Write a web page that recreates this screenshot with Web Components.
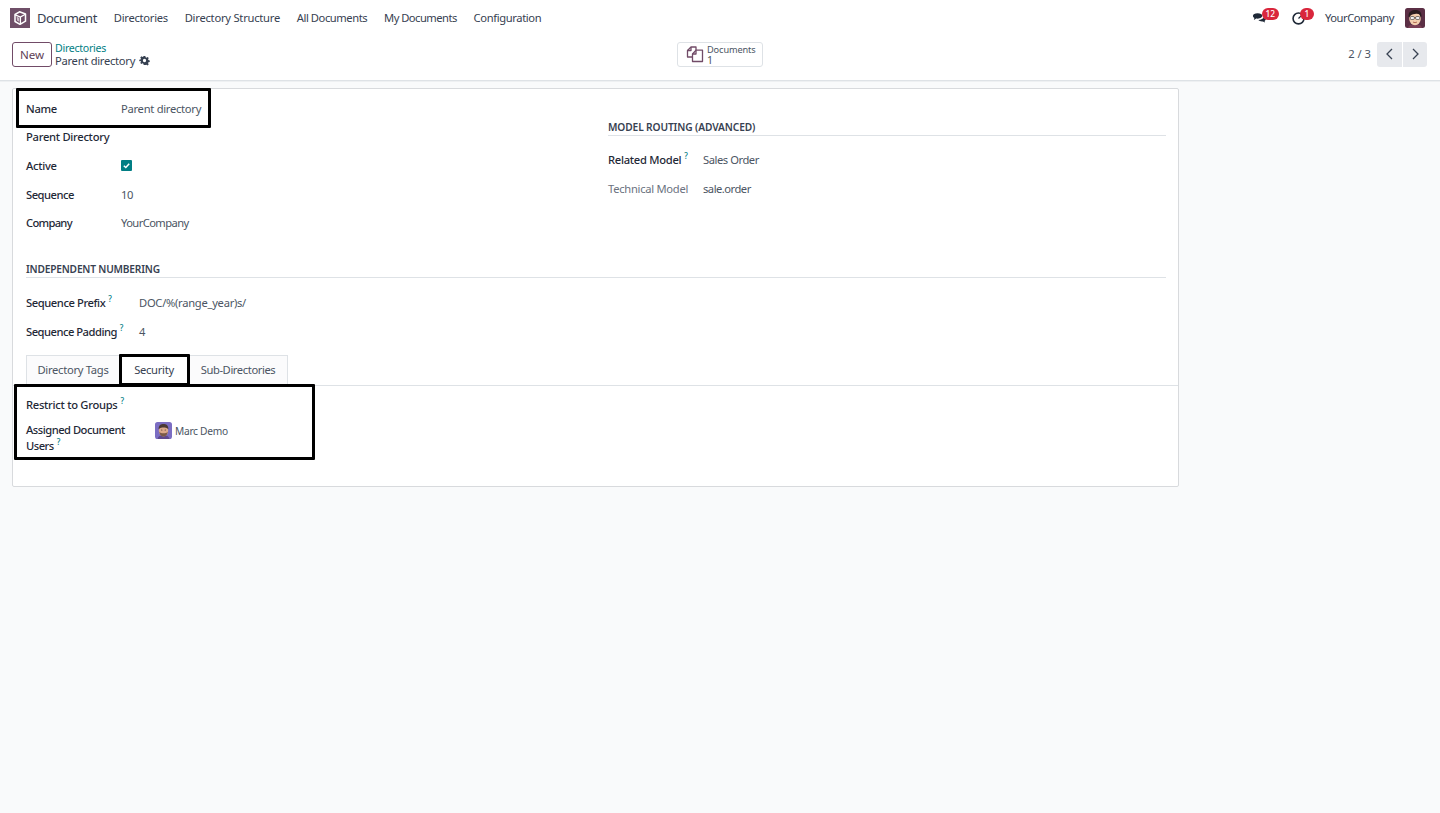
<!DOCTYPE html>
<html lang="en"><head><meta charset="utf-8"><title>Document</title>
<style>
html,body{margin:0;padding:0;height:100%}
body{background:#f9fafb;font:11.2px/16px "Noto Sans",sans-serif;letter-spacing:-.28px;color:#374151;overflow:hidden}
</style></head>
<body>
<doc-app></doc-app>
<script>
const def=(n,html,init)=>customElements.define(n,class extends HTMLElement{constructor(){super();this.attachShadow({mode:'open'}).innerHTML=html(this)}connectedCallback(){init&&init(this)}});
const FACE=`<svg viewBox="0 0 20 20" width="100%" height="100%" style="display:block"><rect width="20" height="20" rx="2.5" fill="#5b2f45"/><path d="M3 20c.6-3 3-4 7-4s6.400 1 7 4z" fill="#7a3f55"/><ellipse cx="10" cy="10.500" rx="5.800" ry="6.700" fill="#f4cfae"/><path d="M3.600 9C3 3.500 7 2 10.500 2c4 0 6.500 2.200 5.900 7l-1.200-.5C15 6 13 5.500 10 6 7.500 6.400 5.600 6.500 4.900 8.800z" fill="#2a1d20"/><rect x="5.300" y="8.600" width="4" height="2.800" rx=".8" fill="#fff" stroke="#333" stroke-width=".7"/><rect x="10.700" y="8.600" width="4" height="2.800" rx=".8" fill="#fff" stroke="#333" stroke-width=".7"/><path d="M9.300 9.700h1.400" stroke="#333" stroke-width=".6"/><path d="M8 14c1.300.8 2.800.8 4 0" stroke="#a5533f" stroke-width=".8" fill="none"/></svg>`;
const MARC=`<svg viewBox="0 0 20 20" width="100%" height="100%" style="display:block"><rect width="20" height="20" rx="3" fill="#7b6dc2"/><path d="M3 20c.6-3.500 3-4.500 7-4.500s6.400 1 7 4.500z" fill="#5e4a8f"/><ellipse cx="10" cy="10" rx="5.500" ry="7" fill="#dba98a"/><path d="M4.300 8.500C4.100 3.500 7 2.300 10 2.300s5.900 1.200 5.700 6.200l-1.100-1C13 6 7 6 5.400 7.500z" fill="#4b3a33"/><path d="M5 11.500c.7 4.500 3 5.500 5 5.500s4.300-1 5-5.500c-1 1.700-2.800 1.800-5 1.800s-4-.1-5-1.800z" fill="#7a5a48"/><circle cx="8" cy="9.300" r=".6" fill="#2b1f1a"/><circle cx="12" cy="9.300" r=".6" fill="#2b1f1a"/></svg>`;

def('doc-logo',()=>`<style>:host{display:block;width:20px;height:20px}</style>
<svg viewBox="0 0 20 20" width="20" height="20" style="display:block"><rect width="20" height="20" fill="#6f4f68"/><path d="M9.500 3.800 15.500 6v7.200L10 16.300 5 13.500V6.500z" fill="none" stroke="#fff" stroke-width="1.500" stroke-linejoin="round"/><path d="M5.200 6.800 10.400 9 15.300 6.200M10.400 9v7" fill="none" stroke="#fff" stroke-width="1.300"/><path d="M6.600 8.300 7 12.500 9.200 13.700V10z" fill="#cbbcc7"/></svg>`);

def('nav-item',()=>`<style>:host{display:block;color:#374151;line-height:35px;padding:0 8.400px;white-space:nowrap}</style><slot></slot>`);

def('nav-badge',h=>`<style>:host{position:relative;display:block;width:14px;height:16px}
span{position:absolute;left:var(--bl,7px);top:-2px;background:#d9263c;color:#fff;font-size:8.400px;letter-spacing:0;line-height:12px;height:12px;min-width:7px;text-align:center;padding:0 3.500px;border-radius:6px;font-weight:500}
svg{display:block}</style><slot></slot><span>${h.getAttribute('count')}</span>`);

def('doc-navbar',()=>`<style>:host{display:flex;align-items:center;height:35px;background:#fff;padding:0 15px 0 10px;box-sizing:border-box}
.brand{font-size:13px;letter-spacing:-.5px;color:#374151;margin:0 8.600px 0 7px;white-space:nowrap}
.sp{flex:1}
.right{display:flex;align-items:center}
.co{margin:0 11px 0 0;white-space:nowrap;letter-spacing:-.46px}
.av{width:20px;height:20px}</style>
<doc-logo></doc-logo><div class="brand">Document</div>
<nav-item>Directories</nav-item><nav-item style="letter-spacing:-.24px">Directory Structure</nav-item><nav-item style="letter-spacing:-.44px">All Documents</nav-item><nav-item style="letter-spacing:-.52px">My Documents</nav-item><nav-item style="letter-spacing:-.38px">Configuration</nav-item>
<div class="sp"></div>
<div class="right">
<nav-badge count="12" style="margin-right:25px;--bl:10px"><svg width="15" height="16" viewBox="0 0 16 16" fill="#1f2937"><path d="M1 4.500C1 3 3 2 6 2s5 1 5 2.700-2 3-5 3c-.5 0-1 0-1.500-.1L2 9l.5-2C1.500 6.300 1 5.500 1 4.500z" transform="translate(0 1)"/><path d="M12 6c1.500.4 2.800 1.300 2.800 2.600 0 .9-.6 1.600-1.400 2l.5 1.800-2.300-1.300c-2 .2-4-.3-4.800-1.400 2.800 0 5.600-1.200 6-3.700z" transform="translate(0 .5)"/></svg></nav-badge>
<nav-badge count="1" style="margin-right:20px;--bl:9px"><svg width="15" height="16" viewBox="0 0 16 16" fill="none" stroke="#1f2937"><circle cx="8" cy="8.500" r="5.800" stroke-width="1.700"/><path d="M8 8.500 10.500 6" stroke-width="1.400"/></svg></nav-badge>
<div class="co">YourCompany</div>
<div class="av">${FACE}</div>
</div>`);

def('doc-controlpanel',()=>`<style>:host{display:grid;grid-template-columns:1fr auto 1fr;align-items:center;background:#fff;border-bottom:1px solid #dee2e6;padding:0 12px;height:45px;box-shadow:0 1px 0 #eef0f2}
.l{display:flex;align-items:center;gap:3px;margin-top:-7px}
.new{box-sizing:border-box;width:40px;height:25px;border:1px solid #714b67;border-radius:3px;color:#5f3f57;background:#fff;font-size:11.600px;letter-spacing:0;line-height:23px;text-align:center}
.crumb a{display:block;color:#017e84;font-size:10.600px;line-height:12px}
.crumb div{display:flex;align-items:center;gap:4px;line-height:13px;color:#374151}
.st{box-sizing:border-box;width:86px;height:25px;border:1px solid #dee2e6;border-radius:3px;display:flex;align-items:center;padding-left:8px;gap:3px;background:#fff;margin-top:-7px}
.st>div{margin-top:1px}
.st b{display:block;font-weight:400;font-size:9.200px;letter-spacing:-.1px;line-height:10px;color:#4b5563}
.st i{display:block;font-style:normal;font-size:10.500px;line-height:10px;color:#4b5563}
.r{display:flex;justify-content:flex-end;align-items:center;margin-top:-7px;padding-right:1px}
.pg{letter-spacing:0;color:#4b5563;margin-right:6px}
.btn{height:25px;background:#e7e9ed;display:flex;align-items:center;justify-content:center}
.btn.a{width:25px;border-radius:3px 0 0 3px;margin-right:1px}.btn.b{width:24px;border-radius:0 3px 3px 0}</style>
<div class="l"><div class="new">New</div><div class="crumb"><a>Directories</a><div>Parent directory <svg width="11" height="11" viewBox="0 0 24 24" fill="#374151"><path d="M10 1h4l.7 3.200 2 .9 2.800-1.700 2.800 2.800-1.700 2.800.9 2 3.200.7v4l-3.200.7-.9 2 1.700 2.800-2.800 2.800-2.800-1.700-2 .9L14 23h-4l-.7-3.200-2-.9-2.800 1.700-2.800-2.800 1.700-2.800-.9-2L-.7 14v-4l3.200-.7.9-2L1.700 4.500l2.800-2.800 2.800 1.700 2-.9zM12 8a4 4 0 1 0 0 8 4 4 0 0 0 0-8z" fill-rule="evenodd" transform="translate(1.200 1.200) scale(.9)"/></svg></div></div></div>
<div class="st"><svg width="18" height="18" viewBox="0 0 18 18" fill="none" stroke="#714b67" stroke-width="1.300" stroke-linejoin="round"><path d="M6 12H1.500V5.500L5 2h5v3"/><path d="M1.500 5.500H5V2"/><path d="M6.500 9 10 5.200h6.500V16.500h-10z" fill="#fff"/><path d="M6.500 9H10V5.200"/></svg><div><b>Documents</b><i>1</i></div></div>
<div class="r"><span class="pg">2 / 3</span><div class="btn a"><svg width="12" height="12" viewBox="0 0 12 12" fill="none" stroke="#374151" stroke-width="1.300"><path d="M8 1 3 6l5 5"/></svg></div><div class="btn b"><svg width="12" height="12" viewBox="0 0 12 12" fill="none" stroke="#374151" stroke-width="1.300"><path d="M4 1l5 5-5 5"/></svg></div></div>`);

def('doc-help',()=>`<style>:host{font-size:8px;color:#017e84;position:relative;top:-5px;margin-left:3px;line-height:0}</style>?`);

def('doc-field',h=>`<style>:host{display:grid;grid-template-columns:var(--lw,95px) 1fr;align-items:center;min-height:var(--rh,28.600px)}
:host([top]){align-items:start}
.lab{font-weight:500;color:#1f2937;line-height:16px}
:host([muted]) .lab{font-weight:400;color:#6b7280}
.val{color:#4b5563;letter-spacing:var(--vs,-.28px)}
:host([top]) .val{margin-top:0}</style>
<div class="lab"><slot name="label"></slot></div><div class="val"><slot></slot></div>`);

def('doc-section',h=>`<style>:host{display:block;border-bottom:1px solid #dee2e6;font-weight:600;font-size:10.200px;letter-spacing:var(--ss,-.2px);line-height:14px;color:#374151;padding-bottom:1px;margin-bottom:var(--sm,10px)}</style><slot></slot>`);

def('doc-tabs',()=>`<style>:host{display:flex;border-bottom:1px solid #dee2e6;padding-left:13px;height:30px}
.t{box-sizing:border-box;height:31px;border:1px solid #dee2e6;border-bottom:0;line-height:28px;text-align:center;color:#4b5563;background:#fbfbfc}
.t.a{background:#fff;color:#374151}
</style><div class="t" style="width:94px">Directory Tags</div><div class="t a" style="width:68px;border-left:0;border-right:0">Security</div><div class="t" style="width:100px;letter-spacing:-.4px">Sub-Directories</div>`);

def('doc-check',()=>`<style>:host{display:block;width:11px;height:11px;background:#017e84;border-radius:1px}</style><svg width="11" height="11" viewBox="0 0 11 11" fill="none" stroke="#fff" stroke-width="1.500" style="display:block"><path d="M2.800 5.700 4.800 7.500 8.200 3.700"/></svg>`);

def('doc-user',()=>`<style>:host{display:flex;align-items:center;gap:3px;font-size:10.200px;color:#4b5563}.a{width:17px;height:17px}</style><div class="a">${MARC}</div><slot></slot>`);

def('doc-mark',h=>`<style>:host{position:absolute;box-sizing:border-box;border:3px solid #000;border-radius:1px;pointer-events:none;left:${h.getAttribute('x')}px;top:${h.getAttribute('y')}px;width:${h.getAttribute('w')}px;height:${h.getAttribute('h')}px}</style>`);

def('doc-sheet',()=>`<style>:host{display:block;box-sizing:border-box;width:1167px;height:399px;margin:7px 0 0 12px;background:#fff;border:1px solid #d8dadd;border-radius:2px}
.top{display:grid;grid-template-columns:582px 1fr;padding:5.500px 12px 0 13px}
.g2{padding-top:25.500px;--lw:95px;--ss:-.12px}
.wide{padding:0 12px 0 13px;margin-top:24.500px;--lw:113px;--sm:11px}
.body{padding:5px 13px 0 13px;--lw:129px}
.body doc-field:last-child{margin-top:3px}
.body doc-field:first-child{min-height:28px}
</style>
<div class="top"><div>
<doc-field><span slot="label">Name</span>Parent directory</doc-field>
<doc-field><span slot="label">Parent Directory</span></doc-field>
<doc-field><span slot="label">Active</span><doc-check></doc-check></doc-field>
<doc-field><span slot="label" style="letter-spacing:-.5px">Sequence</span>10</doc-field>
<doc-field style="--vs:-.6px"><span slot="label" style="letter-spacing:-.7px">Company</span>YourCompany</doc-field>
</div><div class="g2">
<doc-section>MODEL ROUTING (ADVANCED)</doc-section>
<doc-field style="--vs:-.45px"><span slot="label">Related Model<doc-help></doc-help></span>Sales Order</doc-field>
<doc-field muted style="--vs:-.5px"><span slot="label">Technical Model</span>sale.order</doc-field>
</div></div>
<div class="wide"><doc-section>INDEPENDENT NUMBERING</doc-section>
<doc-field><span slot="label" style="letter-spacing:-.42px">Sequence Prefix<doc-help></doc-help></span>DOC/%(range_year)s/</doc-field>
<doc-field><span slot="label" style="letter-spacing:-.5px">Sequence Padding<doc-help></doc-help></span>4</doc-field></div>
<doc-tabs style="margin-top:9px"></doc-tabs>
<div class="body">
<doc-field><span slot="label">Restrict to Groups<doc-help></doc-help></span></doc-field>
<doc-field top><span slot="label" style="letter-spacing:-.5px">Assigned Document Users<doc-help></doc-help></span><doc-user>Marc Demo</doc-user></doc-field>
</div>`);

def('doc-app',()=>`<style>:host{display:block;position:relative;height:813px;overflow:hidden}</style>
<doc-navbar></doc-navbar><doc-controlpanel></doc-controlpanel><doc-sheet></doc-sheet>
<doc-mark x="16" y="88" w="195" h="40"></doc-mark>
<doc-mark x="119" y="354" w="71" h="32"></doc-mark>
<doc-mark x="14" y="384" w="301" h="76"></doc-mark>`);
</script>
</body></html>
